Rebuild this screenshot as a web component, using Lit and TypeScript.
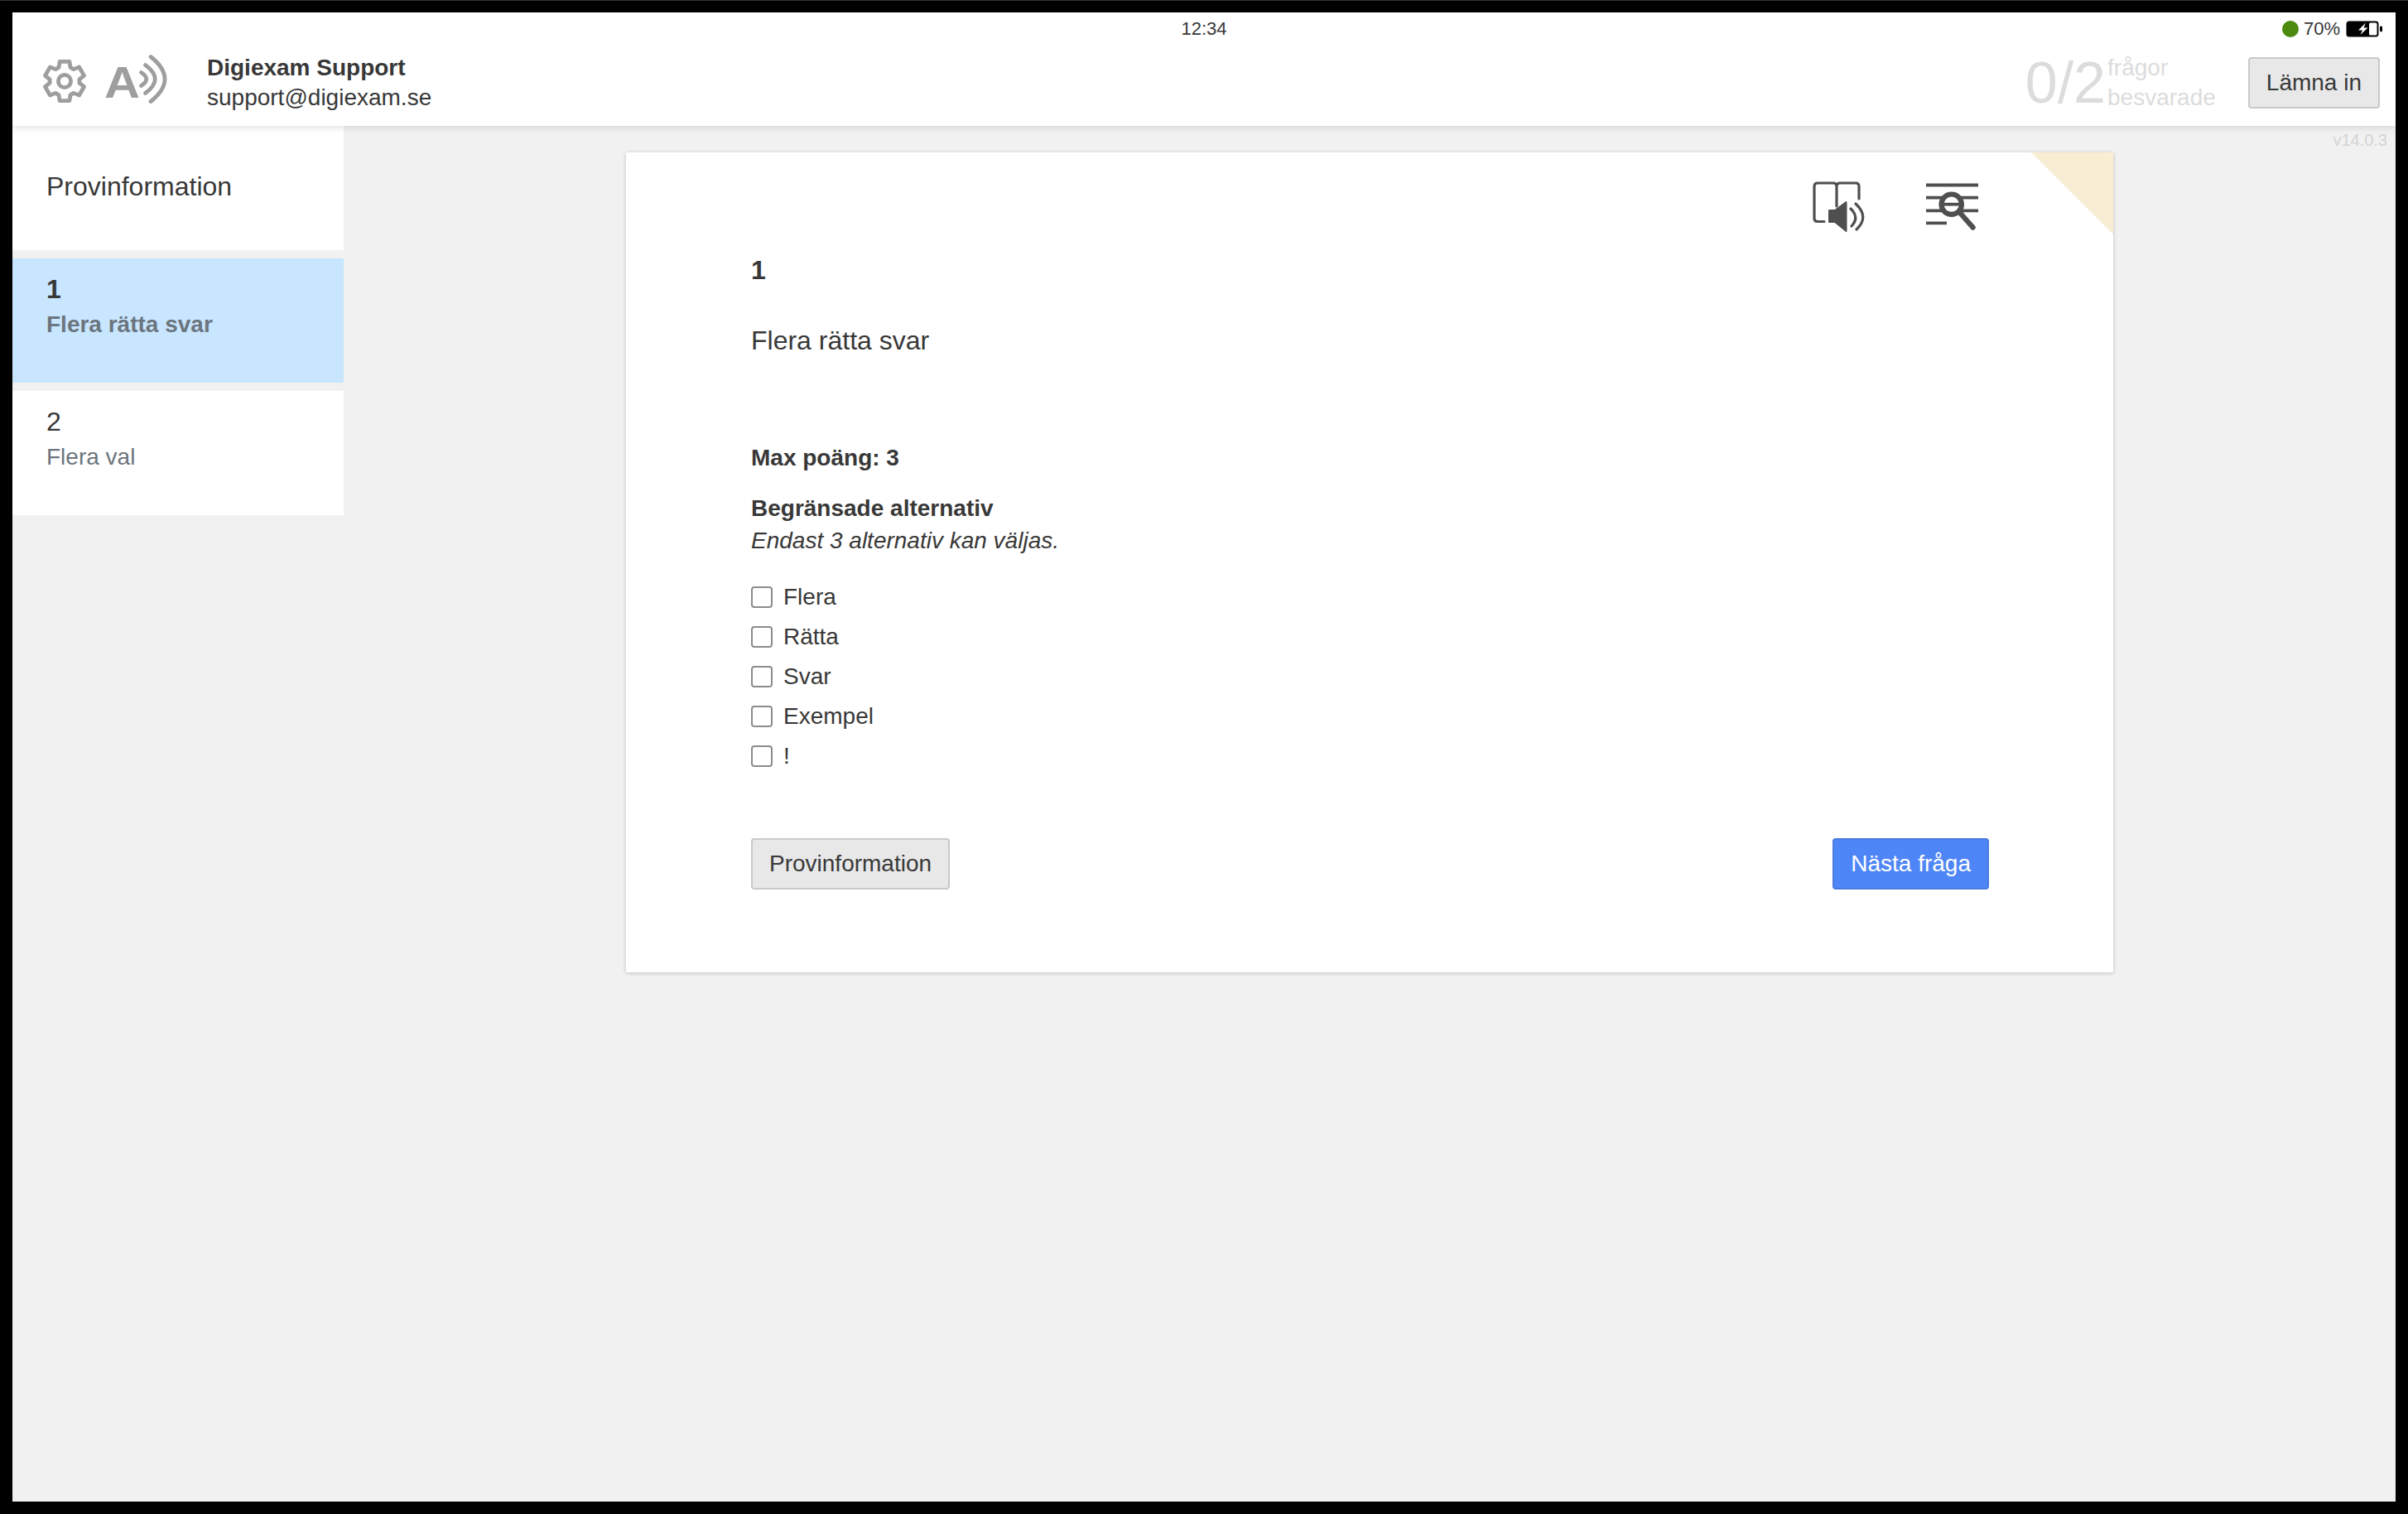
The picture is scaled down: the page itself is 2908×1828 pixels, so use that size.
import { LitElement, html, css } from "lit";
import { customElement } from "lit/decorators.js";

function gearPath(): string {
  const c = 28;
  const pts: string[] = [];
  for (let k = 0; k < 6; k++) {
    const a = -90 + k * 60;
    const list: [number, number][] = [[18, a - 23], [24.4, a - 14], [24.4, a + 14], [18, a + 23]];
    for (const [r, d] of list) {
      const t = (d * Math.PI) / 180;
      pts.push(`${(c + r * Math.cos(t)).toFixed(2)} ${(c + r * Math.sin(t)).toFixed(2)}`);
    }
  }
  return "M" + pts.join("L") + "Z";
}

const gearIcon = html`<svg class="gear" viewBox="0 2 56 56" fill="none" stroke="#9e9e9e" stroke-width="4.8" stroke-linejoin="round">
  <path d=${gearPath()}></path><circle cx="28" cy="28" r="7.6"></circle></svg>`;

const speechIcon = html`<svg class="speech" viewBox="125 64.5 80 70" fill="none">
  <text class="speech-a" x="126" y="117" textLength="43" lengthAdjust="spacingAndGlyphs">A</text>
  <g stroke="#9e9e9e" stroke-width="4.8" stroke-linecap="round">
    <path d="M170.5 87Q183 95 170.5 103"></path>
    <path d="M175.5 78Q199 95 175.5 112"></path>
    <path d="M182 68Q216 95 182 122"></path>
  </g></svg>`;

const toolIcons = html`<svg class="tools" viewBox="0 0 240 90" fill="none" stroke="#4f4f4f">
  <path stroke-width="3.2" stroke-linecap="round" d="M33 62.5H25Q21 62.5 21 58.5V20Q21 16 25 16H44Q48 16 48 20V44M48 20Q48 16 52 16H71Q75 16 75 20V35"></path>
  <path fill="#4f4f4f" stroke-width="2" stroke-linejoin="round" d="M39 49H46L59.5 39V74L46 63H39Z"></path>
  <path stroke-width="3.2" stroke-linecap="round" d="M65 47Q76 57.5 66 68M71 41Q88 57 72 72"></path>
  <path stroke-width="3.8" d="M156 18.5H219M156 33.7H219M156 49.3H219M156 64.3H181"></path>
  <circle cx="186.7" cy="41.7" r="12.2" fill="#fff" stroke-width="6.2"></circle>
  <path stroke-width="3.8" d="M176 41.7H197"></path>
  <path stroke-width="6.4" stroke-linecap="round" d="M197 52L212.5 69.5"></path>
</svg>`;

const battery = html`<svg class="battery" viewBox="0 0 44 20">
  <rect x="0.5" y="0.5" width="39" height="19" rx="3.5" fill="#000"></rect>
  <rect x="28" y="2.5" width="9.5" height="15" rx="1.5" fill="#fff"></rect>
  <rect x="41" y="6.5" width="3" height="7" rx="1.4" fill="#000"></rect>
  <path d="M24 2.5L15 11.5H20L17.5 17L26.5 8.5H21.5Z" fill="#fff"></path>
</svg>`;

@customElement("app-root")
export class AppRoot extends LitElement {
  static styles = css`
    :host {
      display: block;
      width: 100vw;
      height: 100vh;
      box-sizing: border-box;
      background: #000;
      border-top: 1px solid #333;
      padding: 14px 15px 15px;
      font-family: "Liberation Sans", Arial, sans-serif;
      font-size: 28px;
      line-height: 36px;
      color: #383838;
      overflow: hidden;
    }
    .screen {
      height: 100%;
      display: flex;
      flex-direction: column;
      background: #f1f1f1;
      position: relative;
    }
    .header {
      height: 137px;
      flex: none;
      background: #fff;
      box-shadow: 0 2px 8px rgba(0, 0, 0, 0.12);
      position: relative;
      z-index: 2;
      display: flex;
      flex-direction: column;
    }
    .status {
      height: 38px;
      flex: none;
      display: grid;
      grid-template-columns: 1fr auto 1fr;
      align-items: center;
      font-size: 22px;
      line-height: 38px;
      padding: 1px 16px 0;
      box-sizing: border-box;
    }
    .status-right {
      grid-column: 3;
      display: flex;
      justify-content: flex-end;
      align-items: center;
    }
    .time { grid-column: 2; }
    .dot {
      width: 20px;
      height: 20px;
      border-radius: 50%;
      background: #4c8a10;
      margin-right: 6px;
    }
    .battery { width: 44px; height: 20px; margin-left: 7px; }
    .main-row {
      flex: 1;
      display: flex;
      align-items: center;
      padding: 0 19px 6px 35px;
    }
    .gear { width: 56px; height: 56px; margin-right: 19px; }
    .speech { width: 80px; height: 70px; margin-right: 45px; }
    .speech-a {
      font-family: "Liberation Sans", Arial, sans-serif;
      font-weight: 700;
      font-size: 54px;
      fill: #9e9e9e;
    }
    .user { flex: 1; }
    .user-name { font-weight: 700; }
    .count { display: flex; align-items: center; color: #dcdcdc; margin-right: 39px; }
    .count-num { font-size: 70px; line-height: 70px; margin-right: 2px; }
    .count-label { line-height: 36px; }
    .btn {
      font: inherit;
      height: 62px;
      box-sizing: border-box;
      padding: 0 20px;
      border: 2px solid #c9c9c9;
      border-radius: 4px;
      background: #e8e8e8;
      color: #383838;
    }
    .btn-primary {
      background: #4f86f7;
      border-color: #4a7be0;
      color: #fff;
    }
    .body { flex: 1; display: flex; position: relative; min-height: 0; }
    .sidebar {
      width: 400px;
      flex: none;
      display: flex;
      flex-direction: column;
      gap: 10px;
    }
    .side-item {
      height: 150px;
      box-sizing: border-box;
      background: #fff;
      padding: 17px 41px;
    }
    .side-title { font-size: 32px; line-height: 40px; padding-top: 36px; }
    .side-item.active { background: #c8e6ff; }
    .side-num { font-size: 32px; line-height: 40px; }
    .active .side-num { font-weight: 700; }
    .side-sub { color: #6c757d; margin-top: 5px; }
    .active .side-sub { font-weight: 700; }
    .content {
      flex: 1;
      display: flex;
      justify-content: center;
      align-items: flex-start;
      padding: 32px 0 0 0;
    }
    .version {
      position: absolute;
      top: 5px;
      right: 10px;
      font-size: 20px;
      line-height: 24px;
      color: #d4d4d4;
    }
    .card {
      width: 1796px;
      box-sizing: border-box;
      background: #fff;
      box-shadow: 0 1px 5px rgba(0, 0, 0, 0.2);
      border-radius: 2px;
      padding: 21px 150px 100px 151px;
      position: relative;
    }
    .corner {
      position: absolute;
      top: 0;
      right: 0;
      width: 99px;
      height: 99px;
      background: #f9eed3;
      clip-path: polygon(0 0, 100% 0, 100% 100%);
    }
    .toolbar { display: flex; justify-content: flex-end; margin-right: -8px; }
    .tools { width: 240px; height: 90px; }
    .q-num { font-size: 32px; line-height: 40px; font-weight: 700; margin-top: 11px; }
    .q-text { font-size: 32px; line-height: 40px; margin-top: 45px; }
    .max { font-weight: 700; margin-top: 104px; }
    .limit-title { font-weight: 700; margin-top: 25px; }
    .limit-note { font-style: italic; margin-top: 3px; }
    .options { margin-top: 26px; display: flex; flex-direction: column; }
    .option { height: 48px; display: flex; align-items: center; gap: 13px; }
    .check {
      appearance: none;
      width: 26px;
      height: 26px;
      margin: 0;
      box-sizing: border-box;
      border: 2px solid #8c8c8c;
      border-radius: 4px;
      background: #fff;
    }
    .actions { display: flex; justify-content: space-between; margin-top: 75px; }
  `;

  render() {
    const options = ["Flera", "Rätta", "Svar", "Exempel", "!"];
    return html`
      <div class="screen">
        <header class="header">
          <div class="status">
            <div class="time">12:34</div>
            <div class="status-right"><span class="dot"></span><span>70%</span>${battery}</div>
          </div>
          <div class="main-row">
            ${gearIcon}${speechIcon}
            <div class="user">
              <div class="user-name">Digiexam Support</div>
              <div>support@digiexam.se</div>
            </div>
            <div class="count">
              <div class="count-num">0/2</div>
              <div class="count-label">frågor<br />besvarade</div>
            </div>
            <button class="btn">Lämna in</button>
          </div>
        </header>
        <div class="body">
          <nav class="sidebar">
            <div class="side-item"><div class="side-title">Provinformation</div></div>
            <div class="side-item active"><div class="side-num">1</div><div class="side-sub">Flera rätta svar</div></div>
            <div class="side-item"><div class="side-num">2</div><div class="side-sub">Flera val</div></div>
          </nav>
          <main class="content">
            <section class="card">
              <div class="corner"></div>
              <div class="toolbar">${toolIcons}</div>
              <div class="q-num">1</div>
              <div class="q-text">Flera rätta svar</div>
              <div class="max">Max poäng: 3</div>
              <div class="limit-title">Begränsade alternativ</div>
              <div class="limit-note">Endast 3 alternativ kan väljas.</div>
              <div class="options">
                ${options.map((o) => html`<label class="option"><input class="check" type="checkbox" /><span>${o}</span></label>`)}
              </div>
              <div class="actions">
                <button class="btn">Provinformation</button>
                <button class="btn btn-primary">Nästa fråga</button>
              </div>
            </section>
          </main>
          <div class="version">v14.0.3</div>
        </div>
      </div>
    `;
  }
}
